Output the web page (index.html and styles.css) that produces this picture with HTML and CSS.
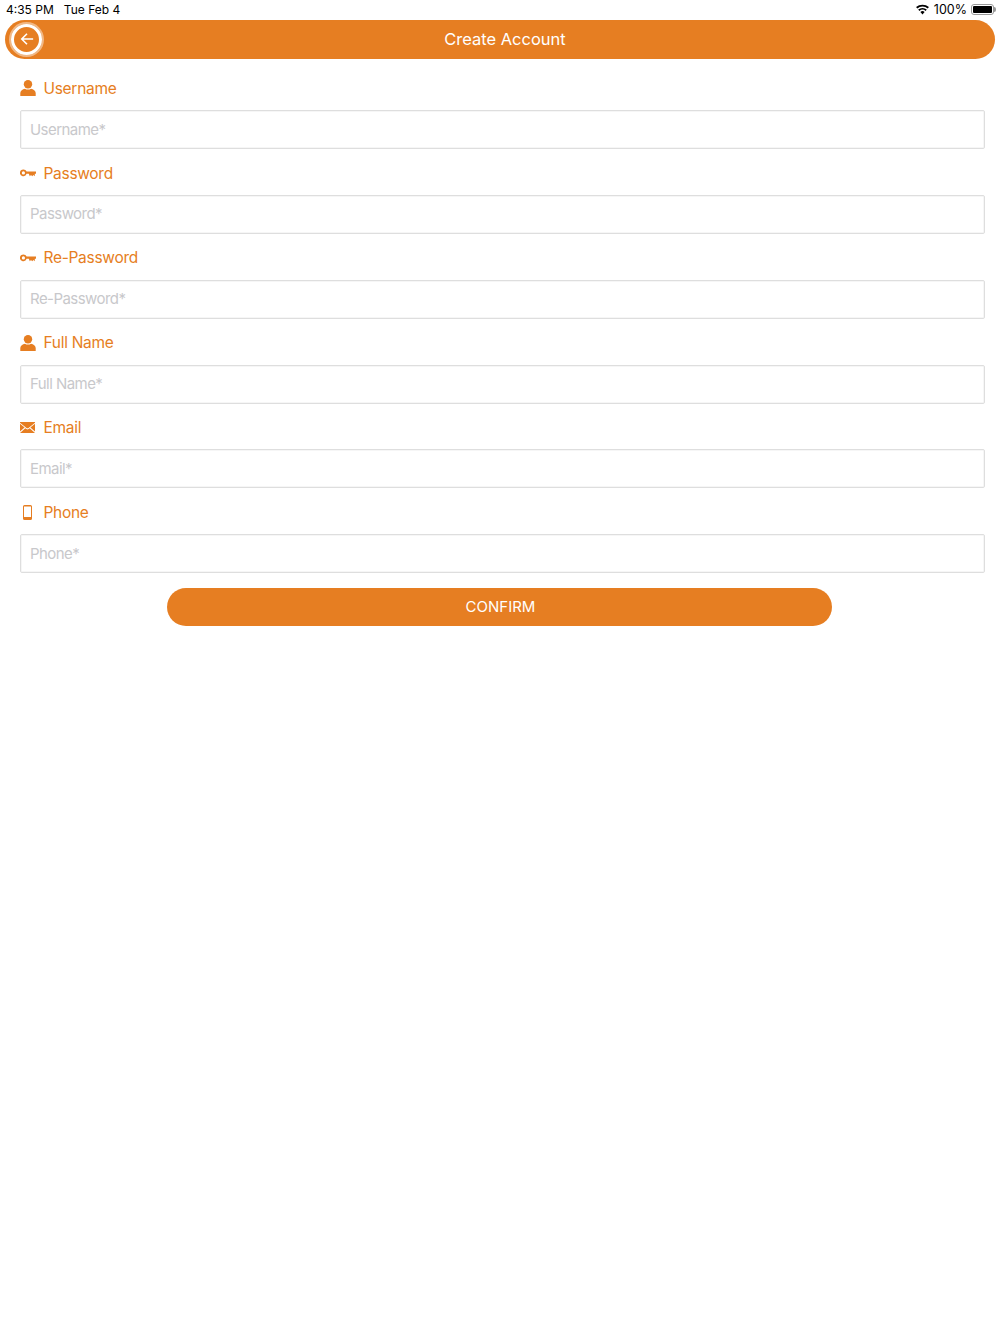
FILE: index.html
```html
<!DOCTYPE html>
<html lang="en">
<head>
    <meta charset="UTF-8">
    <meta name="viewport" content="width=device-width, initial-scale=1.0">
    <title>Create Account</title>
    <link rel="stylesheet" href="styles.css">
</head>
<body>
    <svg class="defs" width="0" height="0">
        <symbol id="i-user" viewBox="0 0 16 16">
            <circle cx="8" cy="4.2" r="4.200"/>
            <path d="M0.300 16v-3c0-2.400 2.300-3.900 4.700-4.300 1.600 1.200 4.400 1.200 6 0 2.400 0.400 4.700 1.900 4.700 4.300v3z"/>
        </symbol>
        <symbol id="i-key" viewBox="0 0 16 8">
            <path fill-rule="evenodd" d="M3.400 0.400a3.400 3.400 0 0 1 3.200 2.200H16v2.200h-1.200v2.400l-1.400-1.200-1.200 1.200-1.200-1.200-1.200 1.200-1-2.400H6.600a3.400 3.400 0 1 1-3.200-4.400zM3.400 2.300a1.600 1.600 0 1 0 0 3.200 1.600 1.600 0 0 0 0-3.200z"/>
        </symbol>
        <symbol id="i-mail" viewBox="0 0 15 11">
            <path d="M0 0H15V0.800L8.800 5.800a2 2 0 0 1-2.600 0L0 0.800z"/>
            <path d="M0 1.800V9.600L4.600 5.500z"/>
            <path d="M15 1.800V9.600L10.400 5.500z"/>
            <path d="M5.300 6.200l1 0.800a2 2 0 0 0 2.400 0l1-0.800 5.300 4.800H0z"/>
        </symbol>
        <symbol id="i-phone" viewBox="0 0 9 15">
            <path fill-rule="evenodd" d="M1.500 0h6A1.500 1.500 0 0 1 9 1.500v12A1.500 1.500 0 0 1 7.500 15h-6A1.500 1.500 0 0 1 0 13.500v-12A1.500 1.500 0 0 1 1.500 0zM1 1.500v10.500h7V1.500z"/>
        </symbol>
    </svg>

    <div class="status-bar">
        <div class="status-left"><span>4:35 PM</span><span>Tue Feb 4</span></div>
        <div class="status-right">
            <svg class="wifi" viewBox="0 0 16 12" width="15" height="11">
                <path d="M8 11.500l-2.300-2.700a3.400 3.400 0 0 1 4.600 0z"/>
                <path d="M4.600 7.600L3.300 6.100a7 7 0 0 1 9.400 0l-1.300 1.500a5 5 0 0 0-6.800 0z"/>
                <path d="M2.300 4.900L1 3.400a10.400 10.400 0 0 1 14 0l-1.300 1.500a8.500 8.500 0 0 0-11.400 0z"/>
            </svg>
            <span>100%</span>
            <div class="battery"><div class="battery-fill"></div></div>
        </div>
    </div>

    <header class="nav-bar">
        <div class="back-btn">
            <svg viewBox="0 0 16 16" width="14" height="14">
                <path d="M15 8H2M8 2L2 8l6 6" fill="none" stroke="#fff" stroke-width="1.800"/>
            </svg>
        </div>
        <h1>Create Account</h1>
    </header>

    <form class="form">
        <div class="field">
            <label><span class="icon"><svg width="16" height="16"><use href="#i-user"/></svg></span>Username</label>
            <input type="text" placeholder="Username*">
        </div>
        <div class="field">
            <label><span class="icon"><svg width="16" height="8"><use href="#i-key"/></svg></span>Password</label>
            <input type="text" placeholder="Password*">
        </div>
        <div class="field">
            <label><span class="icon"><svg width="16" height="8"><use href="#i-key"/></svg></span>Re-Password</label>
            <input type="text" placeholder="Re-Password*">
        </div>
        <div class="field">
            <label><span class="icon"><svg width="16" height="16"><use href="#i-user"/></svg></span>Full Name</label>
            <input type="text" placeholder="Full Name*">
        </div>
        <div class="field">
            <label><span class="icon"><svg width="15" height="11"><use href="#i-mail"/></svg></span>Email</label>
            <input type="text" placeholder="Email*">
        </div>
        <div class="field">
            <label><span class="icon"><svg width="9" height="15"><use href="#i-phone"/></svg></span>Phone</label>
            <input type="text" placeholder="Phone*">
        </div>
        <button type="button" class="confirm">CONFIRM</button>
    </form>
</body>
</html>
```

FILE: styles.css
```css
body {
    font-family: Inter, "Liberation Sans", sans-serif;
    background: #fff;
    color: #000;
    margin: 0;
    padding: 0;
}

.defs {
    position: absolute;
}

.status-bar {
    box-sizing: border-box;
    height: 20px;
    padding: 0 6px 2px;
    display: flex;
    justify-content: space-between;
    align-items: center;
    font-size: 12px;
}

.status-left {
    display: flex;
    gap: 10px;
}

.status-right {
    display: flex;
    align-items: center;
    gap: 5px;
    font-size: 12.500px;
}

.wifi {
    fill: #000;
    margin-right: -1px;
}

.battery {
    position: relative;
    box-sizing: border-box;
    width: 23px;
    height: 11px;
    padding: 1px;
    border: 1px solid #999;
    border-radius: 3px;
    margin-left: -1px;
}

.battery::after {
    content: "";
    position: absolute;
    right: -3px;
    top: 2px;
    width: 2px;
    height: 5px;
    background: #999;
    border-radius: 0 2px 2px 0;
}

.battery-fill {
    height: 100%;
    background: #000;
    border-radius: 1px;
}

.nav-bar {
    height: 39px;
    margin: 0 5px;
    padding-left: 3px;
    background: #e67e22;
    border-radius: 20px;
    display: flex;
    align-items: center;
    position: relative;
}

.back-btn {
    width: 25px;
    height: 25px;
    border: 3px solid #fff;
    box-shadow: 0 0 0 2px rgba(255, 255, 255, 0.45);
    border-radius: 50%;
    display: flex;
    justify-content: center;
    align-items: center;
    margin-left: 3px;
    margin-top: -1px;
}

.nav-bar h1 {
    position: absolute;
    left: 0;
    right: 0;
    margin: 0 0 1px;
    padding-left: 10px;
    text-align: center;
    color: #fff;
    font-size: 16.500px;
    font-weight: 400;
}

.form {
    padding: 11px 15px 0 20px;
}

.field {
    margin-bottom: 5.850px;
}

.field label {
    box-sizing: border-box;
    height: 40px;
    padding-bottom: 3.400px;
    display: flex;
    align-items: center;
    color: #e67e22;
    font-size: 15.500px;
    letter-spacing: -0.300px;
}

.icon {
    width: 16px;
    margin-right: 8px;
    margin-left: -0.500px;
    display: flex;
    justify-content: center;
    fill: #e67e22;
}

.field input {
    display: block;
    box-sizing: border-box;
    width: 100%;
    height: 39px;
    padding: 0 9px 1px;
    border: 1px solid #dedede;
    border-radius: 2px;
    box-shadow: inset 0 0 0 1px #f6f6f6;
    background: #fff;
    font-family: inherit;
    font-size: 15px;
    letter-spacing: -0.550px;
    outline: none;
}

.field input::placeholder {
    color: #c8c8cb;
}

.confirm {
    display: block;
    width: 665px;
    height: 38px;
    margin: 15px 0 0 147px;
    padding: 0 0 1px 2px;
    border: none;
    border-radius: 19px;
    background: #e67e22;
    color: #fff;
    font-family: inherit;
    font-size: 15px;
}
```
